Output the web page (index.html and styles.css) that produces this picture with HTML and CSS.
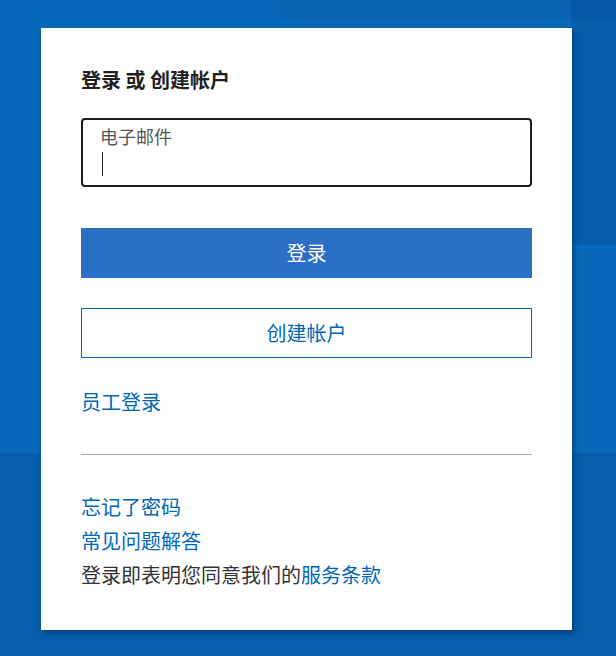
FILE: index.html
```html
<!DOCTYPE html>
<html lang="zh-CN">
<head>
    <meta charset="UTF-8">
    <meta name="viewport" content="width=device-width, initial-scale=1.0">
    <title>登录 或 创建帐户</title>
    <link rel="stylesheet" href="styles.css">
</head>
<body>
    <div class="card">
        <h1 class="title">登录 或 创建帐户</h1>

        <div class="field">
            <span class="field-label">电子邮件</span>
            <span class="caret"></span>
        </div>

        <a href="#" class="button primary">登录</a>
        <a href="#" class="button outline">创建帐户</a>

        <a href="#" class="link staff">员工登录</a>

        <hr class="divider">

        <div class="footer-links">
            <a href="#" class="link">忘记了密码</a>
            <a href="#" class="link">常见问题解答</a>
            <p class="terms">登录即表明您同意我们的<a href="#" class="link">服务条款</a></p>
        </div>
    </div>
</body>
</html>
```

FILE: styles.css
```css
html, body {
    height: 100%;
}
body {
    margin: 0;
    padding: 28px 0 0 41px;
    box-sizing: border-box;
    font-family: "Noto Sans CJK SC", "Liberation Sans", sans-serif;
    color: #333;
    background-color: #0768b9;
    background-repeat: no-repeat;
    background-image:
        linear-gradient(rgba(0, 25, 70, 0.13), rgba(0, 25, 70, 0.13)),
        linear-gradient(rgba(0, 25, 70, 0.11), rgba(0, 25, 70, 0.11)),
        linear-gradient(rgba(0, 25, 70, 0.06), rgba(0, 25, 70, 0.06));
    background-position: right top, left bottom, 280px top;
    background-size: 45px 245px, 100% 203px, 336px 20px;
}
.card {
    width: 531px;
    height: 602px;
    box-sizing: border-box;
    background-color: white;
    padding: 40px 40px 0 40px;
    box-shadow: 2px 3px 6px rgba(0, 0, 0, 0.35);
}
.title {
    font-size: 20px;
    font-weight: bold;
    color: #1f1f1f;
    line-height: 24px;
    margin: 0 0 26px 0;
}
.field {
    height: 69px;
    box-sizing: border-box;
    border: 2px solid #1b1b1b;
    border-radius: 4px;
    padding: 4px 18px 0 17px;
    display: flex;
    flex-direction: column;
}
.field-label {
    font-size: 18px;
    line-height: 24px;
    color: #555;
}
.caret {
    width: 1px;
    height: 24px;
    background-color: #222;
    margin: 4px 0 0 2px;
}
.button {
    display: block;
    height: 50px;
    line-height: 48px;
    box-sizing: border-box;
    text-align: center;
    font-size: 20px;
    text-decoration: none;
}
.button.primary {
    margin-top: 41px;
    background-color: #2a6ec6;
    color: white;
    border: 1px solid #2a6ec6;
}
.button.outline {
    margin-top: 30px;
    color: #0067b8;
    border: 1px solid #0067b8;
}
.link {
    color: #0067b8;
    text-decoration: none;
    font-size: 20px;
}
.staff {
    display: block;
    margin-top: 30px;
    line-height: 28px;
}
.divider {
    border: none;
    border-top: 1px solid #ababab;
    margin: 38px 0 0 0;
}
.footer-links {
    margin-top: 35px;
    display: flex;
    flex-direction: column;
}
.footer-links .link {
    line-height: 34px;
}
.terms {
    margin: 0;
    font-size: 20px;
    line-height: 34px;
    color: #333;
}
```
